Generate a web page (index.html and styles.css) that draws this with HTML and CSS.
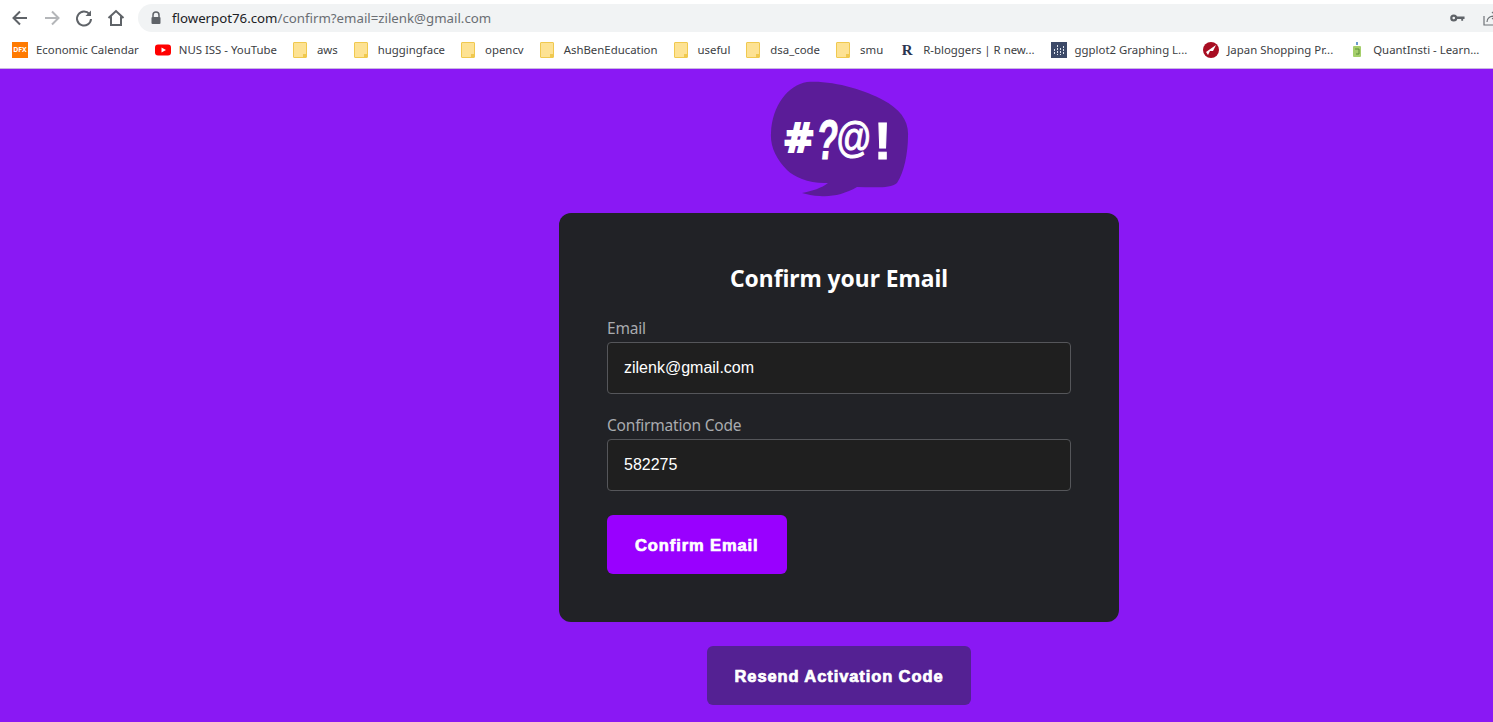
FILE: index.html
```html
<!DOCTYPE html>
<html lang="en">
<head>
  <meta charset="UTF-8">
  <title>Confirm your Email</title>
  <link rel="stylesheet" href="styles.css">
</head>
<body>
<div class="toolbar">
  <svg class="nav-icon" viewBox="0 0 20 20"><path d="M17 10H4M10 3.500 3.500 10l6.500 6.500" class="stroke"/></svg>
  <svg class="nav-icon faded" viewBox="0 0 20 20"><path d="M3 10h13M10 3.500l6.500 6.500-6.500 6.500" class="stroke"/></svg>
  <svg class="nav-icon" viewBox="0 0 20 20"><path d="M15.500 6.200A7 7 0 1 0 17 11" class="stroke"/><path d="M17 2.500V8h-5.500z" class="fill"/></svg>
  <svg class="nav-icon" viewBox="0 0 20 20"><path d="M2.500 10 10 3l7.500 7M5 8.500V17h10V8.500" class="stroke"/></svg>
  <div class="omnibox">
    <svg class="lock" viewBox="0 0 12 14"><path d="M3 6V4a3 3 0 0 1 6 0v2" class="lock-arc"/><rect x="1.500" y="6" width="9" height="7" rx="1" class="fill"/></svg>
    <span class="url"><span class="host">flowerpot76.com</span>/confirm?email=zilenk@gmail.com</span>
    <svg class="key" viewBox="0 0 16 10"><circle cx="4" cy="5" r="2.600" class="key-ring"/><path d="M7 3.500h8.500v2.500H14v2h-2V6H7z" class="fill"/></svg>
    <svg class="share" viewBox="0 0 14 16"><path d="M1 6v9h13M4 12c0-4 3-6 8-6M9 2l4 4-4 3" class="thin"/></svg>
  </div>
</div>

<div class="bookmarks">
  <a class="mark"><span class="fav dfx">DFX</span>Economic Calendar</a>
  <a class="mark"><svg class="fav" viewBox="0 0 16 16"><rect y="2.500" width="16" height="11" rx="3" fill="#f00"/><path d="M6.500 5.500 11 8l-4.500 2.500z" fill="#fff"/></svg>NUS ISS - YouTube</a>
  <a class="mark folder">aws</a>
  <a class="mark folder">huggingface</a>
  <a class="mark folder">opencv</a>
  <a class="mark folder">AshBenEducation</a>
  <a class="mark folder">useful</a>
  <a class="mark folder">dsa_code</a>
  <a class="mark folder">smu</a>
  <a class="mark"><span class="fav rb">R</span>R-bloggers | R new...</a>
  <a class="mark"><svg class="fav" viewBox="0 0 16 16"><rect width="16" height="16" fill="#3d4a68"/><path d="M3.500 7v6M6.500 3v10M9.500 6v7M12.500 4v9" stroke="#dfe4ee" stroke-dasharray="2 1"/></svg>ggplot2 Graphing L...</a>
  <a class="mark"><svg class="fav" viewBox="0 0 16 16"><circle cx="8" cy="8" r="8" fill="#a80d22"/><path d="M3 10 13 3 10 9 7 9 5 13z" fill="#fff"/></svg>Japan Shopping Pr...</a>
  <a class="mark"><svg class="fav" viewBox="0 0 16 16"><rect x="4" y="4" width="8" height="11" rx="1" fill="#a5cf6b"/><rect x="7" y="0" width="2" height="3" fill="#6b9bd0"/><path d="M6 7h4v5H7" fill="none" stroke="#5c8f3c"/></svg>QuantInsti - Learn...</a>
</div>

<main class="page">
  <svg class="logo" viewBox="0 0 140 116">
    <path class="bubble" d="M37 1C62-1 95 9 113 19c17 9 26 21 25 36 0 17-4 37-11 47-7 6-25 4-40 4-12 7-25 10-37 9-7 0-13-2-18-3 10-2 20-5 26-10-18 1-34-6-41-13C6 78 0 65 1 52 2 25 18 4 37 1z"/>
    <text class="logo-text hash" transform="translate(13 71) scale(1 1.050)">#</text>
    <text class="logo-text quest" transform="translate(45 78) skewX(-6) scale(.62 1)">?</text>
    <text class="logo-text at" transform="translate(66 71) scale(.88 1.050)">@</text>
    <text class="logo-text bang" x="104" y="78">!</text>
  </svg>

  <form class="card">
    <h1>Confirm your Email</h1>
    <label class="field">
      <span class="field-label">Email</span>
      <input type="text" value="zilenk@gmail.com">
    </label>
    <label class="field">
      <span class="field-label">Confirmation Code</span>
      <input type="text" value="582275">
    </label>
    <button type="button" class="btn btn-confirm">Confirm Email</button>
  </form>

  <button type="button" class="btn btn-resend">Resend Activation Code</button>
</main>
</body>
</html>
```

FILE: styles.css
```css
* {
  box-sizing: border-box;
}
html, body {
  height: 100%;
}
body {
  margin: 0;
  display: flex;
  flex-direction: column;
  overflow: hidden;
  background: #8a18f4;
  font-family: "Noto Sans", "Open Sans", sans-serif;
}

/* browser chrome */
.toolbar {
  height: 37px;
  padding-top: 4px;
  display: flex;
  align-items: flex-start;
  background: #fff;
}
.nav-icon {
  width: 20px;
  height: 20px;
  margin: 4px 0 0 12px;
  flex: none;
}
.nav-icon:first-child {
  margin-left: 10px;
}
.stroke {
  fill: none;
  stroke: #5f6368;
  stroke-width: 2;
}
.faded .stroke {
  stroke: #b4b6b9;
}
.fill {
  fill: #5f6368;
}
.omnibox {
  flex: 1;
  height: 28px;
  margin-left: 12px;
  margin-right: -10px;
  padding-left: 12px;
  display: flex;
  align-items: center;
  background: #f1f3f4;
  border-radius: 14px 0 0 14px;
}
.lock {
  width: 12px;
  height: 14px;
  flex: none;
}
.lock-arc {
  fill: none;
  stroke: #5f6368;
  stroke-width: 1.500;
}
.url {
  margin-left: 10px;
  font-size: 13.250px;
  color: #6a6e73;
  white-space: nowrap;
}
.host {
  color: #202124;
}
.key {
  width: 15px;
  height: 10px;
  margin-left: auto;
  flex: none;
}
.key-ring {
  fill: none;
  stroke: #5f6368;
  stroke-width: 2.400;
}
.share {
  width: 14px;
  height: 16px;
  margin-left: 18px;
  margin-right: 6px;
  flex: none;
}
.thin {
  fill: none;
  stroke: #6f7377;
  stroke-width: 1.200;
}

.bookmarks {
  height: 32px;
  padding: 0 0 6px 12px;
  display: flex;
  align-items: center;
  gap: 16px;
  background: #fff;
  border-bottom: 1px solid #c9b8e0;
  font-size: 11.400px;
  color: #3c4043;
  white-space: nowrap;
}
.mark {
  display: flex;
  align-items: center;
  gap: 8px;
}
.fav {
  width: 16px;
  height: 16px;
  flex: none;
}
.dfx {
  background: #ff7a00;
  color: #fff;
  font-size: 7px;
  font-weight: 700;
  line-height: 16px;
  text-align: center;
}
.rb {
  color: #2a3550;
  font-family: "Liberation Serif", serif;
  font-size: 15px;
  font-weight: 700;
  line-height: 16px;
  text-align: center;
}
.folder {
  gap: 10px;
}
.folder::before {
  content: "";
  width: 12px;
  height: 14px;
  background: #fde293 linear-gradient(#f0c94f, #f0c94f) no-repeat right bottom / 3px 3px;
  border: 1px solid #f0c94f;
  border-radius: 1px;
}

/* page */
.page {
  flex: 1;
  width: 560px;
  margin-left: 559px;
  padding-top: 12px;
  display: flex;
  flex-direction: column;
  align-items: center;
}
.logo {
  width: 140px;
  height: 116px;
  margin-left: 2px;
  flex: none;
}
.bubble {
  fill: #5b1c98;
}
.logo-text {
  fill: #fff;
  stroke: #fff;
  font-weight: 700;
}
.hash {
  font-family: "DejaVu Sans", sans-serif;
  font-size: 38px;
  stroke-width: 2;
}
.quest {
  font-family: "Liberation Sans", sans-serif;
  font-size: 56px;
  stroke-width: 1;
}
.at {
  font-family: "Liberation Sans", sans-serif;
  font-size: 40px;
  font-weight: 400;
  stroke-width: 1;
}
.bang {
  font-family: "Liberation Sans", sans-serif;
  font-size: 52px;
  stroke-width: 1;
}
.card {
  width: 560px;
  height: 409px;
  margin-top: 16px;
  padding: 48px 48px 0;
  flex: none;
  display: flex;
  flex-direction: column;
  align-items: flex-start;
  background: #212226;
  border-radius: 12px;
}
.card h1 {
  width: 100%;
  margin: 0 0 17px;
  color: #fff;
  font-size: 22.800px;
  font-weight: 700;
  line-height: 36px;
  text-align: center;
}
.field {
  width: 100%;
  margin-bottom: 17px;
  display: block;
}
.field-label {
  display: block;
  height: 28px;
  color: #a9abaf;
  font-size: 15.500px;
  letter-spacing: -0.2px;
  line-height: 28px;
}
.field input {
  width: 100%;
  height: 52px;
  padding: 0 16px;
  display: block;
  background: #1f1f1f;
  border: 1px solid #55565a;
  border-radius: 4px;
  color: #fff;
  font-family: "Liberation Sans", Arial, sans-serif;
  font-size: 16px;
}
.btn {
  height: 59px;
  padding: 2px 28px 0;
  flex: none;
  border: none;
  border-radius: 6px;
  color: #fff;
  font-family: "Liberation Sans", Arial, sans-serif;
  font-size: 16.500px;
  font-weight: 700;
  letter-spacing: 0.9px;
  -webkit-text-stroke: 0.7px #fff;
}
.btn-confirm {
  margin-top: 7px;
  background: #9900ff;
}
.btn-resend {
  margin-top: 24px;
  background: #542193;
}
```
